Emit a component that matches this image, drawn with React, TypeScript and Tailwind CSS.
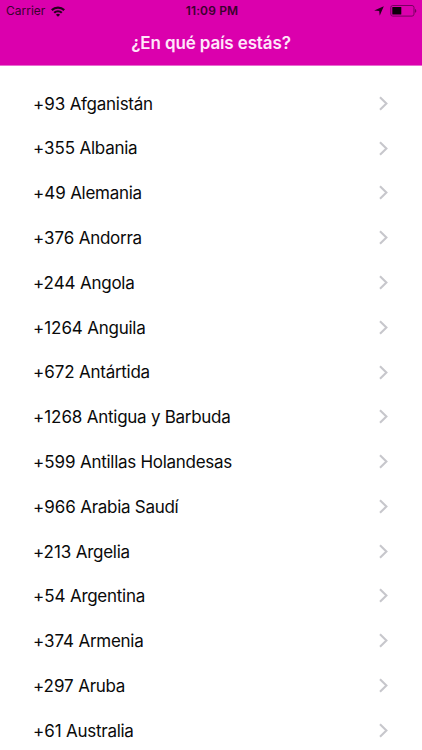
import React from 'react';

interface Country {
  code: string;
  name: string;
}

const countries: Country[] = [
  { code: '+93', name: 'Afganistán' },
  { code: '+355', name: 'Albania' },
  { code: '+49', name: 'Alemania' },
  { code: '+376', name: 'Andorra' },
  { code: '+244', name: 'Angola' },
  { code: '+1264', name: 'Anguila' },
  { code: '+672', name: 'Antártida' },
  { code: '+1268', name: 'Antigua y Barbuda' },
  { code: '+599', name: 'Antillas Holandesas' },
  { code: '+966', name: 'Arabia Saudí' },
  { code: '+213', name: 'Argelia' },
  { code: '+54', name: 'Argentina' },
  { code: '+374', name: 'Armenia' },
  { code: '+297', name: 'Aruba' },
  { code: '+61', name: 'Australia' },
];

function WifiIcon() {
  return (
    <svg className="h-[11px] w-[14px]" viewBox="0 0 14 11" fill="none" stroke="#25001d" strokeWidth="2.2">
      <path d="M0.8 4.1a8.8 8.8 0 0 1 12.4 0" />
      <path d="M3.2 6.8a5.4 5.4 0 0 1 7.6 0" />
      <path d="M7 10.8 4.9 8.7a3 3 0 0 1 4.2 0z" fill="#25001d" stroke="none" />
    </svg>
  );
}

function LocationIcon() {
  return (
    <svg className="h-[10px] w-[10px]" viewBox="0 0 10 10" fill="#25001d">
      <path d="M9.8 0.2 5.7 9.8 5.2 4.9 0.2 4.6z" />
    </svg>
  );
}

function BatteryIcon() {
  return (
    <svg className="h-[12px] w-[27px]" viewBox="0 0 27 12" fill="none">
      <rect x="0.8" y="0.5" width="23.2" height="10.6" rx="2" stroke="#780061" />
      <rect x="2.3" y="2" width="9" height="7.6" rx="0.5" fill="#0d000a" />
      <path d="M25 4v3.8c.8-.3 1.3-1 1.3-1.9S25.8 4.3 25 4z" fill="#780061" />
    </svg>
  );
}

function Chevron() {
  return (
    <svg className="h-[15px] w-[9px] shrink-0" viewBox="0 0 9 15" fill="none" stroke="#c7c7cc" strokeWidth="2.1">
      <path d="M1 1.2 7.4 7.5 1 13.8" />
    </svg>
  );
}

function StatusBar() {
  return (
    <div className="grid h-[22px] grid-cols-3 items-center pl-[6px] pr-[5px] text-[#3a002e]">
      <div className="flex items-center gap-[6px]">
        <span className="text-[12px] leading-none">Carrier</span>
        <WifiIcon />
      </div>
      <span className="pl-px text-center text-[12px] font-semibold leading-none tracking-[0.15px]">11:09 PM</span>
      <div className="flex items-center justify-end gap-[6px]">
        <LocationIcon />
        <BatteryIcon />
      </div>
    </div>
  );
}

export default function App() {
  return (
    <main className="h-[750px] w-[422px] overflow-hidden bg-white font-['Inter',sans-serif]">
      <header className="h-[66px] border-b border-[#e86bd0] bg-[#db00ad]">
        <StatusBar />
        <h1 className="text-center text-[17px] font-semibold leading-[42px] tracking-[-0.13px] text-[#ffe6fa]">
          ¿En qué país estás?
        </h1>
      </header>
      <ul className="pt-[15px]">
        {countries.map((country) => (
          <li key={country.name} className="flex h-[44.79px] items-center justify-between pl-[33px] pr-[34px]">
            <span className="pt-[1.6px] text-[17px] leading-none tracking-[-0.28px] text-[#0a0a0a]">
              <span className="tracking-[-0.05px]">{country.code}</span> {country.name}
            </span>
            <Chevron />
          </li>
        ))}
      </ul>
    </main>
  );
}
